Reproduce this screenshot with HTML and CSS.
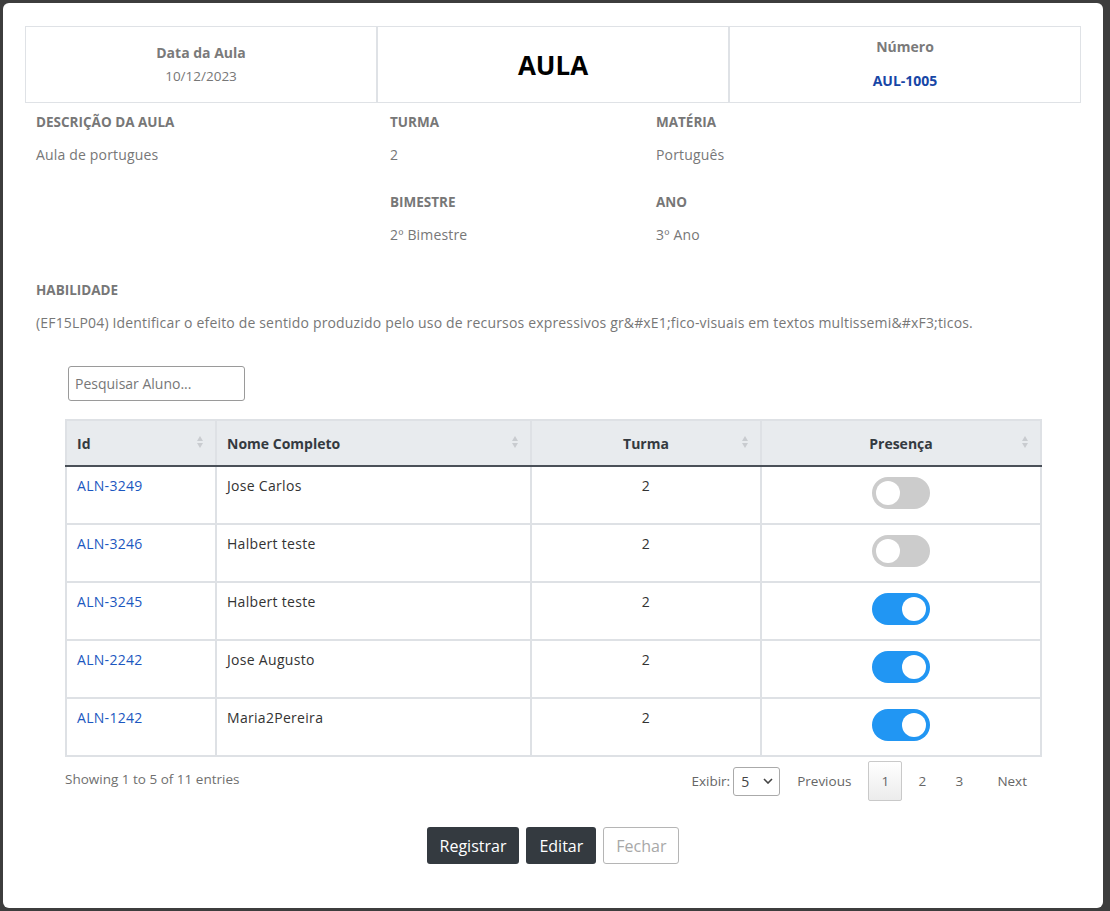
FILE: index.html
```html
<!DOCTYPE html>
<html lang="pt-BR">
<head>
<meta charset="utf-8">
<title>Aula</title>
<link rel="stylesheet" href="styles.css">
</head>
<body>
<div class="backdrop">
  <div class="modal">
    <div class="head-grid">
      <div class="head-cell">
        <div class="head-label">Data da Aula</div>
        <div class="head-value">10/12/2023</div>
      </div>
      <div class="head-cell">
        <div class="head-title">AULA</div>
      </div>
      <div class="head-cell head-cell-num">
        <div class="head-label">Número</div>
        <div class="head-code">AUL-1005</div>
      </div>
    </div>

    <div class="info-grid">
      <div class="info">
        <div class="info-label">DESCRIÇÃO DA AULA</div>
        <div class="info-value">Aula de portugues</div>
      </div>
      <div class="info">
        <div class="info-label">TURMA</div>
        <div class="info-value">2</div>
      </div>
      <div class="info">
        <div class="info-label">MATÉRIA</div>
        <div class="info-value">Português</div>
      </div>
      <div class="info"></div>
      <div class="info">
        <div class="info-label">BIMESTRE</div>
        <div class="info-value">2º Bimestre</div>
      </div>
      <div class="info">
        <div class="info-label">ANO</div>
        <div class="info-value">3º Ano</div>
      </div>
    </div>

    <div class="skill">
      <div class="info-label">HABILIDADE</div>
      <div class="info-value">(EF15LP04) Identificar o efeito de sentido produzido pelo uso de recursos expressivos gr&amp;#xE1;fico-visuais em textos multissemi&amp;#xF3;ticos.</div>
    </div>

    <div class="table-wrap">
      <input class="search" type="text" placeholder="Pesquisar Aluno...">
      <table class="students">
        <thead>
          <tr>
            <th class="c-id">Id<span class="sort"></span></th>
            <th class="c-name">Nome Completo<span class="sort"></span></th>
            <th class="c-turma center">Turma<span class="sort"></span></th>
            <th class="c-pres center">Presença<span class="sort"></span></th>
          </tr>
        </thead>
        <tbody>
          <tr>
            <td><a href="#">ALN-3249</a></td>
            <td>Jose Carlos</td>
            <td class="center">2</td>
            <td class="center"><span class="toggle"></span></td>
          </tr>
          <tr>
            <td><a href="#">ALN-3246</a></td>
            <td>Halbert teste</td>
            <td class="center">2</td>
            <td class="center"><span class="toggle"></span></td>
          </tr>
          <tr>
            <td><a href="#">ALN-3245</a></td>
            <td>Halbert teste</td>
            <td class="center">2</td>
            <td class="center"><span class="toggle on"></span></td>
          </tr>
          <tr>
            <td><a href="#">ALN-2242</a></td>
            <td>Jose Augusto</td>
            <td class="center">2</td>
            <td class="center"><span class="toggle on"></span></td>
          </tr>
          <tr>
            <td><a href="#">ALN-1242</a></td>
            <td>Maria2Pereira</td>
            <td class="center">2</td>
            <td class="center"><span class="toggle on"></span></td>
          </tr>
        </tbody>
      </table>
      <div class="table-foot">
        <div class="entries">Showing 1 to 5 of 11 entries</div>
        <div class="pager">
          <span class="exibir">Exibir:</span>
          <span class="select">5<svg width="10" height="6" viewBox="0 0 10 6"><path d="M1 1l4 4 4-4" fill="none" stroke="#444" stroke-width="1.6"/></svg></span>
          <span class="page-link prev">Previous</span>
          <span class="page-link active">1</span>
          <span class="page-link">2</span>
          <span class="page-link">3</span>
          <span class="page-link next">Next</span>
        </div>
      </div>
    </div>

    <div class="actions">
      <button class="btn btn-dark">Registrar</button>
      <button class="btn btn-dark">Editar</button>
      <button class="btn btn-outline">Fechar</button>
    </div>
  </div>
</div>
</body>
</html>
```

FILE: styles.css
```css
* { box-sizing: border-box; }
html, body { margin: 0; padding: 0; }
body {
  background: #3d3d3d;
  font-family: "Open Sans", "Liberation Sans", sans-serif;
  width: 1110px;
  height: 911px;
  overflow: hidden;
}
.backdrop {
  padding: 3px 7px 3px 3px;
}
.modal {
  width: 1100px;
  height: 905px;
  background: #fff;
  border-radius: 6px;
  padding: 23px 22px 0 22px;
}
.head-grid {
  display: grid;
  grid-template-columns: repeat(3, 1fr);
  height: 77px;
}
.head-cell {
  border: 1px solid #dfe2e6;
  display: flex;
  flex-direction: column;
  align-items: center;
  justify-content: center;
}
.head-label {
  font-size: 14px;
  font-weight: 700;
  color: #7a7a7a;
  line-height: 18px;
}
.head-value {
  font-size: 13.5px;
  color: #777;
  margin-top: 5px;
  line-height: 18px;
}
.head-title {
  font-size: 26px;
  font-weight: 700;
  color: #000;
}
.head-cell-num { justify-content: flex-start; padding-top: 11px; }
.head-code {
  font-size: 14px;
  font-weight: 700;
  color: #1746a6;
  margin-top: 16px;
  line-height: 18px;
}
.info-grid {
  display: grid;
  grid-template-columns: 354px 266px 1fr;
  padding: 0 11px;
  margin-top: 9px;
}
.info { height: 80px; }
.info-label {
  font-size: 13.5px;
  font-weight: 700;
  color: #777;
  line-height: 20px;
}
.info-value {
  font-size: 14px;
  letter-spacing: 0.17px;
  color: #777;
  line-height: 20px;
  margin-top: 13px;
}
.skill {
  padding: 0 11px;
  margin-top: 8px;
}
.table-wrap {
  padding: 0 41px 0 40px;
  margin-top: 33px;
}
.search {
  display: block;
  margin-left: 3px;
  width: 177px;
  height: 35px;
  border: 1px solid #9a9a9a;
  border-radius: 3px;
  padding: 0 6px;
  font-family: inherit;
  font-size: 14px;
  color: #333;
}
.search::placeholder { color: #777; }
.students {
  margin-top: 18px;
  width: 975px;
  border-collapse: collapse;
  table-layout: fixed;
  font-size: 14px;
}
.students th, .students td {
  border: 2px solid #dee1e5;
}
.students th {
  background: #e8ebee;
  height: 46px;
  text-align: left;
  padding: 0 10px;
  color: #343a40;
  font-weight: 700;
  position: relative;
  border-bottom: 2px solid #4a5058;
}
.c-id { width: 150px; }
.c-name { width: 315px; }
.c-turma { width: 230px; }
.c-pres { width: 280px; }
.students .center { text-align: center; }
.sort {
  position: absolute;
  right: 11px;
  top: 15px;
  width: 7px;
  height: 14px;
}
.sort::before, .sort::after {
  content: "";
  position: absolute;
  left: 0;
  border-left: 3.5px solid transparent;
  border-right: 3.5px solid transparent;
}
.sort::before { top: 0; border-bottom: 5px solid #c9ccd0; }
.sort::after { top: 7px; border-top: 5px solid #c9ccd0; }
.students td {
  height: 58px;
  vertical-align: top;
  padding: 9px 10px 0 10px;
  color: #333;
  line-height: 20px;
  letter-spacing: 0.3px;
}
.students td a {
  color: #1c57c0;
  text-decoration: none;
}
.toggle {
  display: inline-block;
  width: 58px;
  height: 32px;
  border-radius: 16px;
  background: #cccccc;
  position: relative;
  margin-top: 1px;
  vertical-align: top;
}
.toggle::after {
  content: "";
  position: absolute;
  top: 4px;
  left: 4px;
  width: 24px;
  height: 24px;
  border-radius: 50%;
  background: #fff;
}
.toggle.on { background: #2196f3; }
.toggle.on::after { left: 30px; }
.table-foot {
  display: flex;
  justify-content: space-between;
  align-items: center;
  margin-top: 4px;
}
.entries {
  font-size: 13.5px;
  color: #6f6f6f;
  margin-top: -4px;
}
.pager {
  display: flex;
  align-items: center;
  font-size: 13.5px;
  color: #666;
  padding-right: 12px;
}
.exibir { margin-right: 3px; }
.select {
  display: inline-flex;
  align-items: center;
  justify-content: space-between;
  width: 47px;
  height: 29px;
  border: 1px solid #aaa;
  border-radius: 3px;
  padding: 0 6px 0 7px;
  font-size: 14px;
  color: #444;
  margin-right: 8px;
}
.page-link {
  display: inline-flex;
  align-items: center;
  justify-content: center;
  height: 40px;
  padding: 0 8px;
  border: 1px solid transparent;
  border-radius: 2px;
  min-width: 34px;
  margin-left: 3px;
}
.page-link.prev { margin-left: 0; margin-right: 8px; }
.page-link.active {
  border-color: #c9c9c9;
  background: linear-gradient(#fff, #ececec);
  margin-left: 0;
}
.page-link.next { padding: 0 0 0 20px; margin-left: 0; }
.actions {
  display: flex;
  justify-content: center;
  gap: 7px;
  margin-top: 26px;
}
.btn {
  height: 37px;
  border-radius: 3px;
  font-family: inherit;
  font-size: 16px;
  padding: 0 12px;
  border: 1px solid transparent;
}
.btn-dark {
  background: #343a40;
  color: #fff;
}
.btn-outline {
  background: #fff;
  border-color: #b5b5b5;
  color: #a8a8a8;
}
```
